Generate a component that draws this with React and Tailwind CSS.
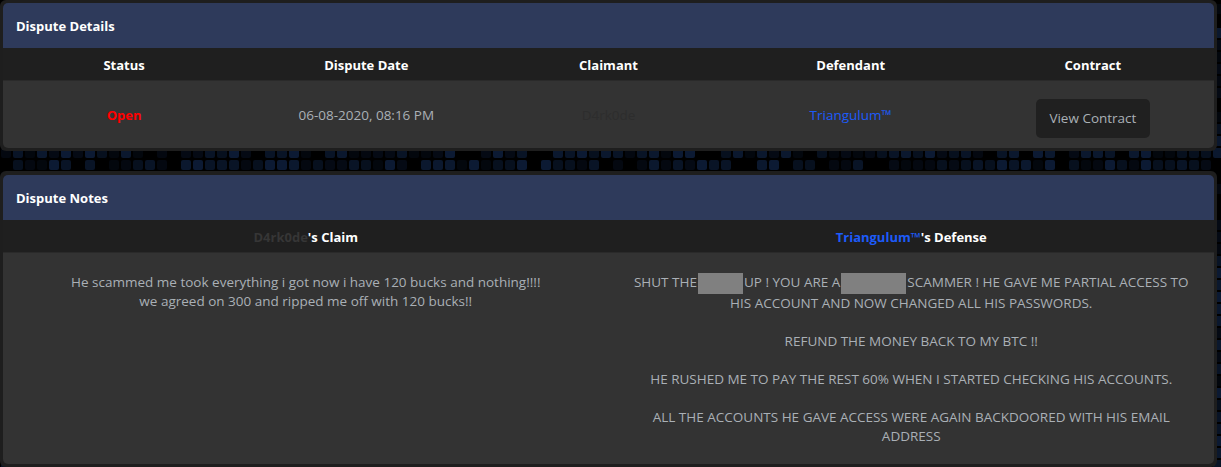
import React from "react";

function Pattern() {
  const palette = ["#000000", "#03070d", "#050a14", "#07101e", "#091426", "#0b182e", "#040810", "#0c1a33"];
  const cols = Math.ceil(1221 / 12) + 1;
  const rows = Math.ceil(467 / 12) + 1;
  const rects = [];
  for (let r = 0; r < rows; r++) {
    for (let c = 0; c < cols; c++) {
      const h = Math.abs(Math.sin(r * 12.9898 + c * 78.233) * 43758.5453) % 1;
      const color = palette[Math.floor(h * palette.length)];
      rects.push(
        <rect key={r + "-" + c} x={c * 12 + 1} y={r * 12 + 4} width="10" height="10" rx="2" fill={color} />
      );
    }
  }
  return (
    <svg className="absolute inset-0" width="1221" height="467" viewBox="0 0 1221 467">
      <rect width="1221" height="467" fill="#000" />
      {rects}
    </svg>
  );
}

function CardHeader({ title }) {
  return (
    <div className="flex h-[45px] items-center bg-[#2e3a5b] px-[13px] pt-[3px] text-[13px] font-bold text-white">
      {title}
    </div>
  );
}

const Redact = ({ w }) => (
  <span className={`mx-[1px] inline-block h-[21px] ${w} bg-[#808080] align-middle`} />
);

export default function App() {
  const font = "font-['Open_Sans',sans-serif]";
  return (
    <div className={`relative h-[467px] w-[1221px] overflow-hidden ${font}`}>
      <Pattern />
      <div className="relative flex w-[1217px] flex-col gap-[20px]">
        {/* Dispute Details */}
        <section className="rounded-[6px] bg-[#1e1e1e] p-[3px]">
          <div className="overflow-hidden rounded-[5px]">
            <CardHeader title="Dispute Details" />
            <div className="grid h-[33px] grid-cols-5 items-center border-b border-[#2a2a2a] bg-[#1f1f1f] pt-[4px] text-center text-[13px] font-bold text-white">
              <div>Status</div>
              <div>Dispute Date</div>
              <div>Claimant</div>
              <div>Defendant</div>
              <div>Contract</div>
            </div>
            <div className="grid h-[67px] grid-cols-5 items-center bg-[#333333] text-center text-[13.5px] text-[#aab0b6]">
              <div className="pt-[2px] text-[13px] font-bold text-[#ff0000]">Open</div>
              <div className="pt-[2px]">06-08-2020, 08:16 PM</div>
              <div className="pt-[2px] text-[#2d2d2d]">D4rk0de</div>
              <div className="pt-[2px] text-[#1d5bfa]">Triangulum™</div>
              <div className="flex justify-center">
                <button className="mt-[8px] flex h-[39px] w-[114px] items-center justify-center rounded-[5px] bg-[#202020] text-[13.5px] text-[#aab0b6]">
                  View Contract
                </button>
              </div>
            </div>
          </div>
        </section>

        {/* Dispute Notes */}
        <section className="rounded-[6px] bg-[#1e1e1e] px-[3px] pb-[3px] pt-[4px]">
          <div className="overflow-hidden rounded-[5px]">
            <CardHeader title="Dispute Notes" />
            <div className="grid h-[33px] grid-cols-2 items-center border-b border-[#2a2a2a] bg-[#1f1f1f] pt-[4px] text-center text-[13px] font-bold text-white">
              <div>
                <span className="text-[#363636]">D4rk0de</span>'s Claim
              </div>
              <div>
                <span className="text-[#1d5bfa]">Triangulum™</span>'s Defense
              </div>
            </div>
            <div className="grid h-[211px] grid-cols-2 bg-[#333333] pt-[20px] text-center text-[13.5px] leading-[19px] text-[#aab0b6]">
              <div className="px-3">
                He scammed me took everything i got now i have 120 bucks and nothing!!!!
                <br />
                we agreed on 300 and ripped me off with 120 bucks!!
              </div>
              <div className="px-3">
                SHUT THE<Redact w="w-[45px]" />UP ! YOU ARE A<Redact w="w-[65px]" />SCAMMER ! HE GAVE ME PARTIAL ACCESS TO
                <br />
                HIS ACCOUNT AND NOW CHANGED ALL HIS PASSWORDS.
                <br />
                <br />
                REFUND THE MONEY BACK TO MY BTC !!
                <br />
                <br />
                HE RUSHED ME TO PAY THE REST 60% WHEN I STARTED CHECKING HIS ACCOUNTS.
                <br />
                <br />
                ALL THE ACCOUNTS HE GAVE ACCESS WERE AGAIN BACKDOORED WITH HIS EMAIL
                <br />
                ADDRESS
              </div>
            </div>
          </div>
        </section>
      </div>
    </div>
  );
}
